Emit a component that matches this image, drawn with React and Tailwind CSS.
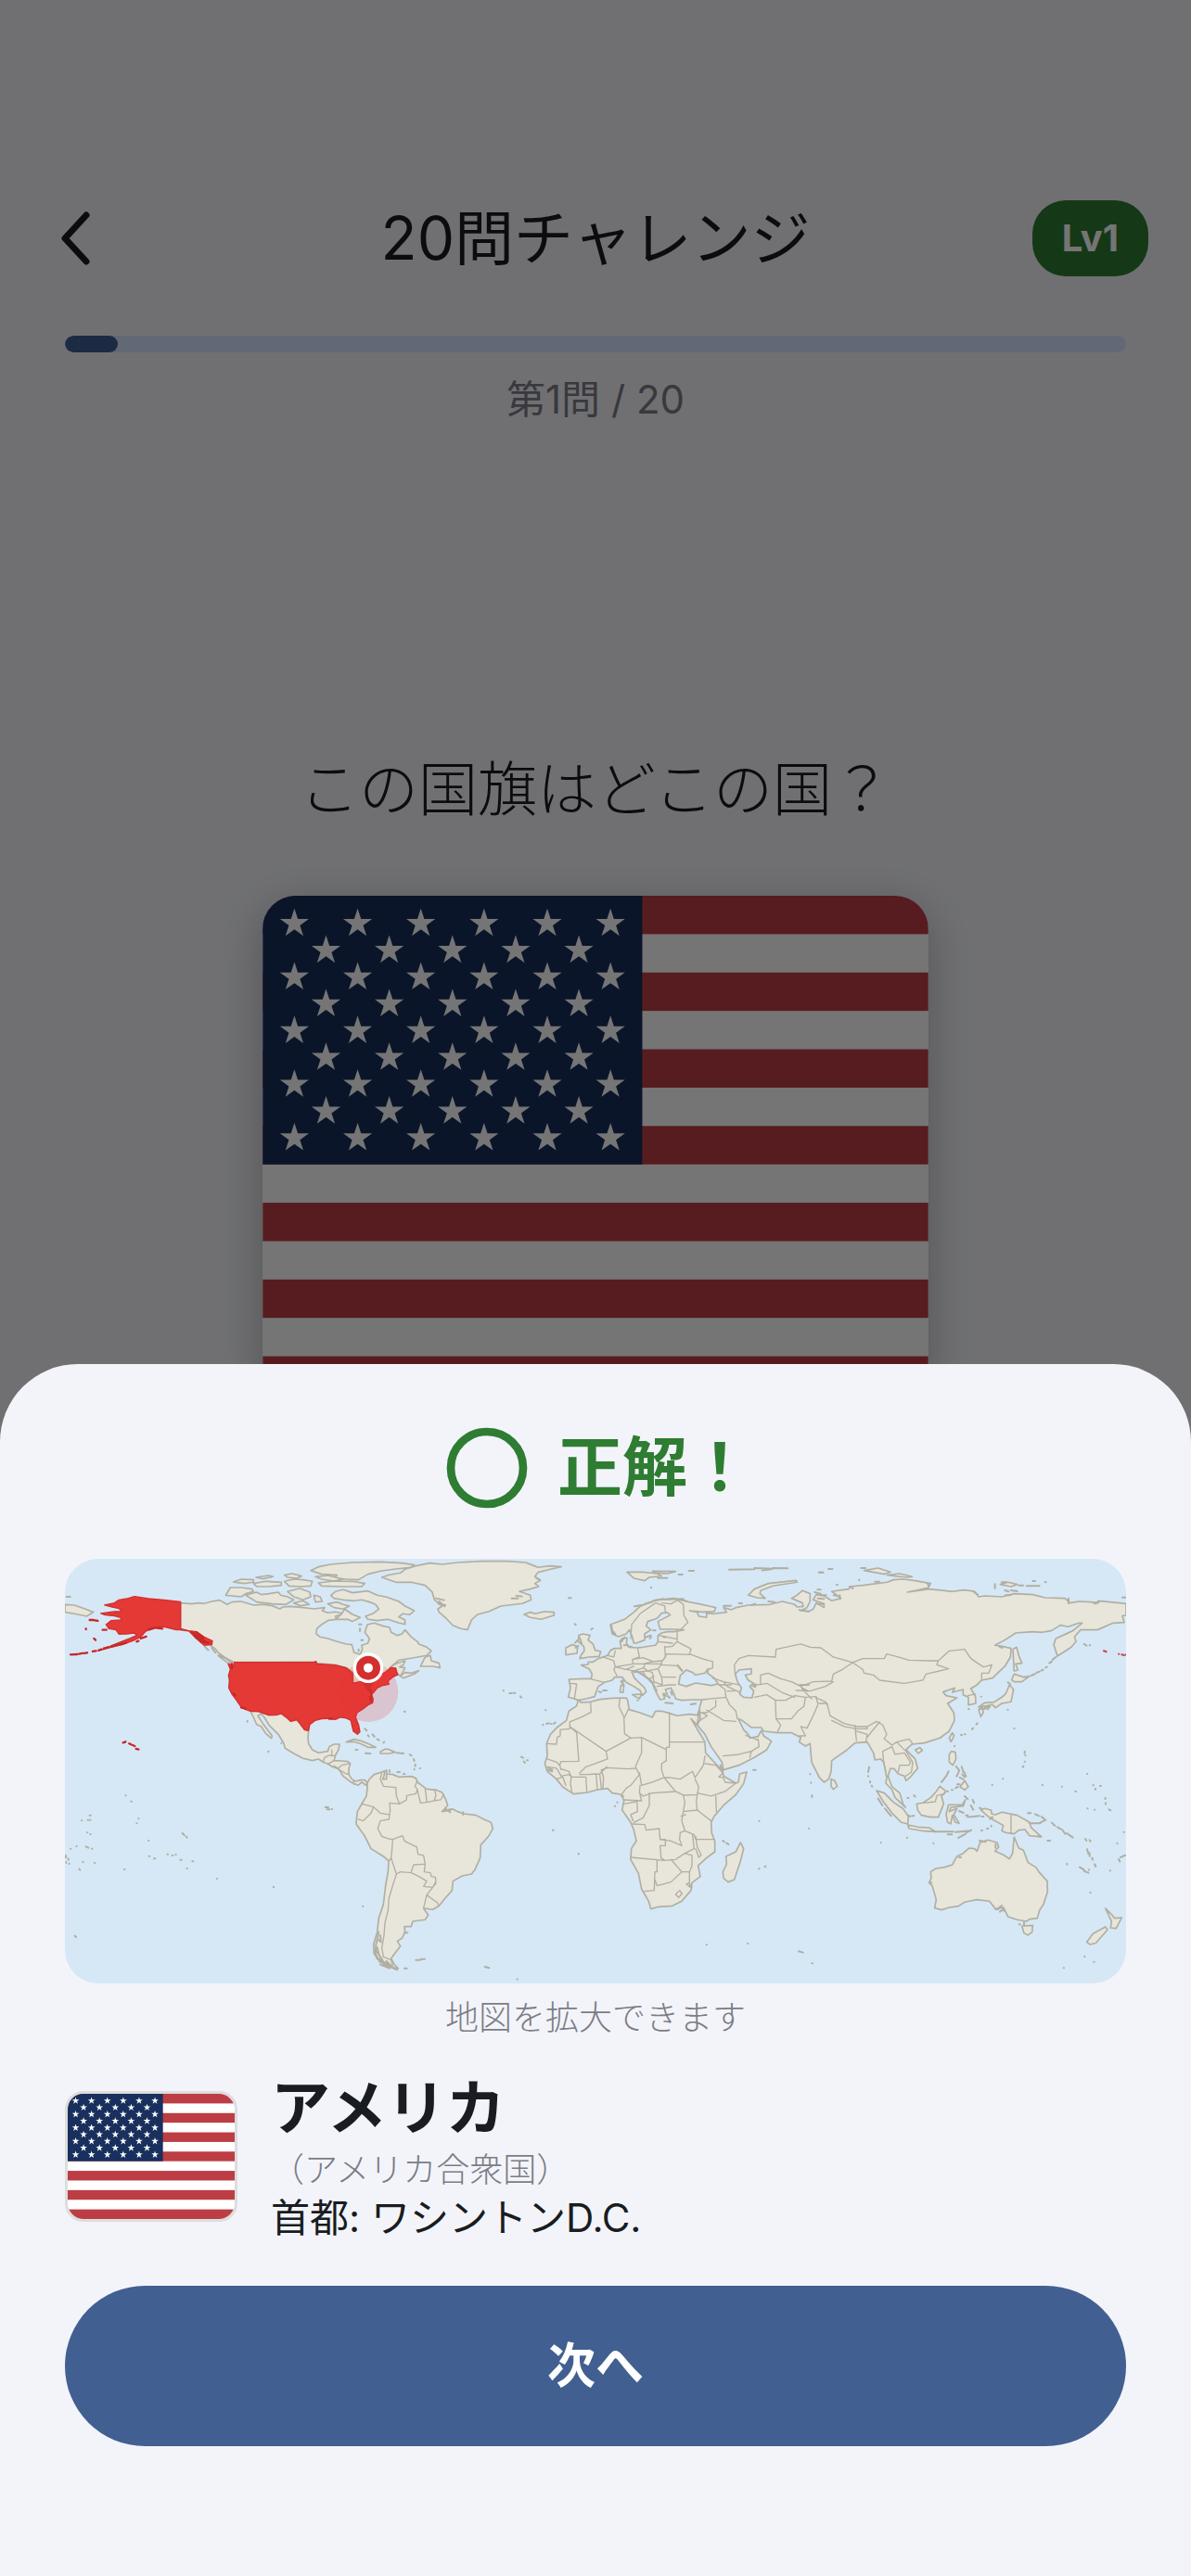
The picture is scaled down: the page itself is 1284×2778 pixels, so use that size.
import { useId } from 'react';

const TOTAL_QUESTIONS = 20;
const CURRENT_QUESTION = 1;

// ---------- Flag ----------

const STAR_POINTS = Array.from({ length: 10 }, (_, i) => {
  const r = i % 2 === 0 ? 14.6 : 5.6;
  const a = (Math.PI / 5) * i - Math.PI / 2;
  return `${(r * Math.cos(a)).toFixed(2)},${(r * Math.sin(a)).toFixed(2)}`;
}).join(' ');

const STARS = [];
for (let row = 0; row < 9; row++) {
  for (let col = row % 2; col < 11; col += 2) {
    STARS.push({ x: (col + 1) * 30.4, y: (row + 1) * 25.8 + 1 });
  }
}

const UsFlag = ({ className }) => {
  const starId = useId();
  return (
    <svg viewBox="0 0 640 480" className={className} role="img" aria-label="アメリカの国旗">
      <rect width="640" height="480" fill="#fff" />
      {[0, 2, 4, 6, 8, 10, 12].map((n) => (
        <rect key={n} y={(n * 480) / 13} width="640" height={480 / 13} fill="#bd3d44" />
      ))}
      <rect width="365" height={(480 / 13) * 7} fill="#192f5d" />
      <defs>
        <polygon id={starId} points={STAR_POINTS} fill="#fff" />
      </defs>
      {STARS.map((s) => (
        <use key={`${s.x}-${s.y}`} href={`#${starId}`} x={s.x} y={s.y} />
      ))}
    </svg>
  );
};

// ---------- World map ----------

// Land outlines, one sheet per quarter of the map. dx is the sheet's shift.
const SHEETS = [
  {
    name: 'north-america',
    dx: -30,
    land: [
      'M404 175L440 178 462 175 480 177 505 170 530 166 555 180 570 172 600 170 640 182 670 180 700 184 725 194 735 188 760 186 800 190 835 194 870 190 862 200 880 207 905 204 932 210 905 218 908 228 880 232 860 245 845 258 842 274 855 285 880 290 910 300 940 308 958 310 965 335 985 342 992 325 990 312 1010 305 1015 290 1000 270 1008 245 1030 240 1060 250 1080 254 1085 270 1105 280 1120 275 1130 262 1150 285 1170 300 1175 308 1200 318 1215 330 1200 345 1150 354 1110 360 1080 385 1100 372 1130 362 1125 375 1112 382 1130 385 1115 412 1107 405 1100 388 1085 388 1065 400 1045 410 1020 425 960 434 962 400 940 385 905 376 845 370 840 366 577 367 560 358 545 350 525 335 518 325 505 315 495 308 480 300 465 275 440 268 404 262Z',
      'M550 150L565 125 600 125 635 130 640 138 615 145 600 155 570 152Z',
      'M615 150L650 140 665 148 690 145 720 140 728 150 750 155 770 165 745 180 700 178 650 172Z',
      'M575 107L600 98 640 100 640 108 610 112ZM648 92L690 86 703 90 670 97ZM640 112L680 105 730 108 730 118 690 122 650 122Z',
      'M740 85L765 80 795 88 780 95 750 92ZM740 105L770 98 800 100 830 105 825 120 790 122 755 120Z',
      'M750 138L790 128 822 140 825 155 800 165 770 155ZM835 150L855 155 862 170 840 172ZM770 175L800 168 820 180 790 184Z',
      'M825 70L850 58 890 50 960 44 1050 42 1120 46 1160 52 1150 60 1100 65 1050 72 1010 82 980 100 940 98 900 95 910 85 860 82Z',
      'M850 110L900 104 960 105 1000 112 990 122 920 122 860 120ZM840 90L880 86 930 98 900 104 860 98Z',
      'M890 150L905 138 930 132 960 142 1010 136 1040 150 1070 156 1110 170 1130 185 1160 200 1145 213 1122 210 1110 220 1130 230 1130 244 1110 240 1075 228 1040 232 1010 228 1002 218 1025 210 1045 195 1035 180 1015 172 990 165 965 168 930 165 900 160Z',
      'M905 228L925 210 935 195 960 212 985 222 960 235 945 228ZM880 178L910 172 930 180 950 185 930 195 900 190Z',
      'M1180 380L1195 350 1212 345 1215 362 1240 370 1243 385 1220 380Z',
      'M1115 412L1130 400 1150 402 1175 394 1160 405 1125 418Z',
      'M525 345L545 352 572 370 555 368Z',
      'M630 526L655 526 690 538 715 537 730 533 750 548 760 558 780 553 790 565 805 585 818 590 816 610 818 630 830 650 850 660 880 655 885 640 900 632 918 632 915 650 906 665 900 685 925 686 945 688 953 695 948 712 948 730 958 745 970 752 985 748 1000 748 1008 757 1004 765 990 755 978 765 955 755 930 735 915 712 895 705 880 695 865 690 850 680 830 685 800 678 770 662 742 645 738 630 720 600 690 570 675 545 665 534 654 540 670 565 685 585 700 605 698 613 680 598 665 575 650 568 640 545Z',
      'M940 625L965 616 990 622 1015 632 1035 642 1010 642 990 632 965 624ZM1050 657L1065 648 1075 648 1098 658 1080 662 1050 662Z',
      'M30 180L60 182 95 194 122 205 100 218 60 210 30 205Z',
      'M1008 757L1015 745 1030 730 1055 722 1065 718 1062 735 1058 745 1070 745 1070 728 1090 730 1110 738 1150 736 1165 742 1170 755 1180 762 1200 777 1230 780 1250 788 1262 812 1268 830 1250 850 1262 848 1285 842 1300 850 1320 857 1360 862 1385 875 1408 885 1414 905 1400 930 1375 958 1373 1000 1355 1040 1345 1052 1315 1058 1285 1075 1282 1105 1260 1130 1240 1155 1220 1167 1190 1163 1205 1185 1195 1200 1155 1205 1150 1222 1128 1222 1130 1240 1120 1260 1105 1270 1115 1285 1100 1305 1085 1325 1095 1345 1108 1358 1080 1352 1050 1335 1030 1310 1028 1280 1040 1240 1045 1195 1060 1150 1067 1090 1075 1045 1077 1010 1060 995 1020 970 1000 930 972 890 973 875 976 850 990 825 1005 800 1008 775Z',
    ],
    borders: [
      'M865 690L870 675 885 668 893 670 893 650M893 670L905 668M880 697L900 685M900 702L915 710 925 700 950 695M918 715L940 728 950 728M963 750L965 762',
    ],
    islets: [
      'M1002 661L1018 662M1103 660L1125 662M1145 665l6 4M1158 680l2 6M1163 697v6M1160 712v2M1000 582l6 6M1010 603l3 4M1025 600l6 8M1040 616l6 3M1060 627l3 -2M970 650h6',
      'M482 316l12 12M505 320l12 16M530 342l14 8M35 155h12M620 557v2M688 655v2M730 628v1M872 836h10M878 843h8M893 842h1',
      'M226 798h1M244 817h2M110 862h3M84 879h1M104 877h2M112 877h1M268 873h1M262 888h1M102 918h1M112 923h1M300 944h1M410 920l6 6M422 931l3 3M67 962h1M48 970h1M98 963l8 4M117 970h1M33 992v6M41 1002v4M34 1014v2M44 1018v1M88 1013h1M126 1016h1M76 1036l3 3M302 994h2M318 1002h4M361 988h2M377 992h2M388 989h1M403 1006h4M442 1011h3M425 1034h1M222 1037h1M521 1067h1M704 1094h2M62 1252l4 4M993 1156h1M1129 526h1M1178 710h1M981 244h8M984 258v8M988 295h6M980 325v6',
    ],
  },
  {
    name: 'atlantic',
    dx: 870,
    land: [
      'M155 92L180 84 215 78 230 66 265 55 310 46 350 50 400 44 480 40 560 40 620 44 640 52 660 60 700 55 735 58 700 66 660 76 650 90 668 102 650 112 662 122 635 130 600 138 635 150 638 165 610 177 540 185 500 203 465 212 445 230 432 262 410 258 385 248 360 222 340 205 336 195 350 185 325 165 318 140 295 118 250 108 200 108Z',
      'M615 212L635 205 650 210 680 203 712 205 712 215 670 228 635 222Z',
    ],
    borders: [
      'M155 725L150 745 160 768 200 772 202 800 212 825 235 812 235 798 265 792 270 778 262 768 270 750M212 825L180 822 182 845 178 875M90 825L128 835 120 855 95 880 78 875M128 835L150 855 178 860M178 875L150 880 142 905 155 930 175 938 190 940M190 940L188 970 185 1000 178 1010M190 940L222 928 228 945 268 965 272 988 290 992 295 1020 292 1045M292 1020L258 1022 250 1045M185 1000L202 1052 215 1045 250 1048M250 1048L275 1060 300 1075 290 1092 320 1095 330 1075 328 1062 315 1060 312 1048 292 1045M330 1082L300 1120 290 1162M300 1120L335 1145 338 1152M202 1052L190 1090 178 1130 175 1170 165 1210 162 1250 155 1290 160 1320 185 1330 190 1350M270 780L280 822 300 820 298 795 295 778M300 820L325 815 330 795 325 780M325 815L345 812 355 795',
    ],
    islets: [
      'M145 1240L136 1280 134 1310 150 1338M140 1262l10 8M134 1300l12 12M142 1325l16 10M160 1342L204 1362M150 1345l30 12M140 1290l6 24 14 22 22 12M130 1302l10 24 22 18M150 1250l2 22M170 1334l20 20M228 1357h8M265 1330h14M282 1327h12M488 1352l14 4M593 1392v1M228 1242h10',
      'M568 467h6M580 466h6M603 477l3 4M548 459h1M684 522h1M676 568v2M688 566l6 -2M700 566h2M710 566l6 -4M606 673l6 3M624 684h3M614 688l4 4M709 910h1M791 987h1M228 526h1M759 159h8M779 243l3 3M832 261l5 -4M690 710l20 4M694 718l14 3M356 848l24 -6M360 840l16 12M418 852v8M330 160l26 6M338 178l22 4M340 170l18 16M575 160h20M590 152l18 2M655 95l10 6M170 716v8M180 716v6M205 722h8M225 728h4',
    ],
  },
  {
    name: 'europe-africa',
    dx: 1530,
    land: [
      'M100 422L150 420 172 420 175 405 165 388 140 376 162 374 163 366 178 366 195 355 210 350 225 345 235 328 248 322 270 322 265 300 272 290 288 288 286 305 295 318 320 320 340 318 380 312 388 300 388 280 400 272 418 268 440 268 472 262 440 260 395 260 388 235 428 214 418 206 400 208 385 225 355 235 350 250 365 262 345 275 345 295 318 305 310 305 305 285 296 262 285 275 260 284 240 275 234 245 280 228 310 205 330 186 380 166 440 160 480 170 520 178 575 190 570 203 530 204 490 200 515 205 520 218 545 222 545 208 570 210 610 205 600 190 625 197 640 190 680 182 750 180 790 170 830 180 838 188 858 186 855 175 820 160 835 152 855 135 880 145 880 170 870 190 850 200 875 203 890 195 900 175 925 190 925 178 890 165 900 148 925 152 950 168 980 160 960 145 950 138 1005 130 1010 122 1050 118 1130 108 1150 100 1180 98 1220 103 1270 112 1262 126 1195 140 1265 130 1340 138 1380 133 1412 138 1425 155 1445 152 1500 155 1540 145 1600 148 1640 158 1705 160 1720 175 1750 170 1790 172 1805 178 1812 168 1902 177 1902 215 1890 217 1896 238 1860 240 1810 262 1755 262 1735 285 1740 300 1725 318 1680 347 1668 310 1675 290 1730 265 1760 240 1750 240 1715 252 1690 247 1660 265 1630 270 1600 268 1545 272 1510 295 1478 312 1500 315 1530 322 1528 350 1510 380 1470 418 1435 425 1420 440 1400 452 1415 478 1416 500 1392 505 1392 480 1375 472 1375 455 1340 464 1348 450 1310 463 1320 475 1355 482 1325 500 1345 530 1347 555 1330 590 1300 612 1250 628 1210 632 1190 650 1220 680 1228 710 1205 738 1190 750 1185 735 1165 728 1152 712 1140 710 1132 735 1145 770 1170 790 1182 830 1155 805 1145 780 1125 758 1128 740 1118 690 1108 680 1090 683 1085 660 1065 625 1025 628 1000 650 950 685 948 720 940 745 925 755 910 740 885 690 880 630 865 638 845 625 850 610 820 595 775 595 730 590 722 578 690 578 660 555 648 550 665 585 680 600 685 612 712 607 722 588 730 605 755 622 740 650 700 675 650 700 600 715 595 690 560 640 540 600 515 570 525 550 522 515 530 488 500 488 465 490 445 485 440 470 430 450 412 455 418 470 405 468 410 485 395 488 380 460 370 435 345 410 318 395 303 398 312 418 345 450 350 462 338 474 330 458 310 445 285 432 272 415 248 415 240 425 215 432 195 445 183 478 155 485 130 490 118 485 98 480 105 450Z',
      'M130 490L140 497 170 495 200 487 240 483 285 482 290 490 295 520 330 530 370 545 380 525 400 525 425 532 450 540 490 535 515 538 522 520 515 570 495 550 525 600 540 625 542 660 575 695 598 720 600 735 640 758 648 755 652 728 675 722 665 760 640 795 600 830 570 865 560 885 562 920 572 945 572 980 545 1000 518 1025 525 1060 498 1080 495 1105 465 1140 435 1155 390 1158 365 1165 358 1140 335 1100 325 1050 300 1005 302 970 318 945 310 910 300 885 272 845 278 815 270 795 240 790 225 775 190 780 160 788 115 793 80 770 60 745 30 720 22 695 30 670 28 630 40 600 65 575 92 555 100 525 125 508Z',
      'M655 950L665 970 655 1010 635 1070 615 1078 600 1065 598 1045 610 1020 608 995 640 980Z',
      'M135 355L165 350 198 348 203 332 185 328 178 308 162 295 168 280 145 275 132 280 130 300 148 315 150 330 140 343ZM90 320L110 310 128 316 126 338 90 343Z',
      'M305 472L335 470 328 485ZM268 442L278 440 275 465 265 463ZM268 428L276 425 274 438Z',
      'M288 75L340 75 385 80 400 88 360 92 345 103 310 95ZM370 72L445 73 420 80 380 78Z',
      'M680 150L700 130 745 112 835 102 838 108 760 120 720 135 718 145 735 160 710 158Z',
    ],
    seas: [
      'M455 438L460 410 480 392 500 400 510 408 540 402 550 388 548 402 570 418 583 437 560 442 510 434 480 445Z',
      'M638 405L650 392 690 388 690 405 670 408 680 425 697 435 685 445 698 460 692 482 665 480 652 470 658 450 645 430Z',
      'M690 440L705 438 702 448Z',
    ],
    borders: [
      'M105 435L125 437 118 485M170 421L215 432M210 350L245 362M225 345L245 350 250 330M245 362L250 382 245 390 255 410M322 320L328 350 305 358 308 372 250 382M250 382L285 390 310 380M305 358L340 352 372 365 340 372 308 372M285 390L310 395 342 385 345 372 400 372 400 362 372 365M410 315L412 350 400 365M342 385L355 395 388 388 400 372M310 400L355 395M345 410L375 435M355 395L370 400 375 430 400 440M340 398L350 418M362 420L375 412M388 388L400 415 445 415M400 375L450 378 465 395M375 440L385 460M385 445L425 440 445 440M400 415L402 440M452 375L468 395',
      'M412 350L415 340 490 342M412 318L435 315 450 300 485 318 495 325 490 340 530 355 565 365 565 385 548 392M390 280L450 292M388 300L435 305M450 268L450 300M300 290L303 245 330 210 380 175 410 185 412 206M400 175L430 178 452 166 470 180 472 215 485 238 462 260',
      'M585 440L605 455 608 480 530 488M565 418L600 430 650 440M585 440L625 440M600 430L612 445 655 465M612 460L635 460M575 490L575 510 545 530 525 530M608 480L620 505 640 525 645 550M545 522L560 530 600 555 640 558M525 555L548 540 530 530M598 670L650 665 690 655 685 675M690 655L715 640 712 615M672 603L710 618',
      'M700 480L740 472 768 490 770 550 785 570 775 592M770 550L820 550 840 525 860 510 865 480M768 490L800 490 830 475 865 480 900 478M700 442L740 435 790 465 830 480M720 440L720 408 745 402 785 420 820 430 850 445M638 410L635 375 650 355 680 345 768 350 770 325 850 308 880 318 915 320 955 350 1018 368M850 445L890 430 950 428 955 405 985 390 1018 368M885 485L860 460 850 445M845 440L870 440M835 458L880 460 930 445 955 430M900 482L930 495 935 505M905 505L890 540 870 580 850 575 865 605 845 605',
      'M900 482L905 500 935 500 945 540 990 565 1030 575 1065 575 1095 558 1115 570M950 555L990 575 1030 582M1115 570L1128 600 1120 615 1145 635 1160 625 1200 615 1212 630M1025 570L1030 620M1030 590L1065 600 1060 625M1065 610L1080 590 1105 560M1065 575L1065 582 1030 582M1145 640L1115 655 1118 690 1125 720M1145 640L1155 665 1185 660 1205 690 1200 700 1170 700 1165 722M1160 625L1190 655 1212 690 1208 722 1190 735M1390 475L1415 470',
      'M1018 368L1050 355 1120 355 1128 340 1165 350 1200 360 1270 362 1295 362 1330 330 1380 325 1400 355 1440 382 1468 375 1458 402 1435 402 1435 422M1018 368L1050 390 1055 402 1085 408 1105 425 1185 435 1245 425 1255 405 1328 388 1290 375 1295 362',
      'M170 497L172 528 140 545 103 560 103 578M28 630L60 632 62 610 72 605 72 585 103 582M103 575L125 595 132 687 75 688 70 700M103 575L220 655 225 680 185 695 155 705 135 725M220 655L300 612 280 598 278 545 262 510 265 485M280 545L292 520M425 530L425 642M425 625L535 625M300 612L335 610 415 650 415 642 425 642M415 650L415 685 400 695 400 715 408 740M335 612L335 660 315 705M315 710L290 712 225 708 205 715M315 705L328 730 300 765 285 775 270 795M328 725L335 765 370 755 408 740M408 740L445 785 370 790 340 800 328 790 330 765M278 812L335 815 330 795M408 740L425 740 460 745 500 720 508 740M508 740L515 730 535 700 540 670M445 785L470 797 515 795 520 770 508 745M540 695L575 700 598 725 585 738 600 740M600 740L605 755 640 758M515 790L560 800 605 785 640 758M575 800L577 850M470 797L475 820 470 850 515 845 512 820 515 795M515 845L560 880M360 790L360 830 340 870 310 885M278 825L320 818 322 850 300 860 308 880M305 890L345 892 350 910 392 905 395 940 430 945 465 960 458 940 460 918 475 912M475 912L465 880 470 850M462 865L478 860M475 912L505 925 510 940 570 940',
      'M395 940L412 940 412 960 395 960 398 1000 410 1008 300 998M410 1008L445 1005 475 985 505 970 500 925M510 930L515 965 528 990 520 998 510 970M475 985L498 992 498 1025 490 1045 465 1045 430 1005M385 1008L385 1045 378 1045 376 1105 345 1108M378 1070L385 1090 430 1078 465 1045M490 1045L490 1085 498 1095M445 1118L458 1105 466 1115 455 1128ZM480 1085L490 1080 492 1095ZM75 715L70 700 60 690 30 680M30 705L60 710 75 735M60 745L80 738 90 765M110 790L105 760 108 738 155 738 158 785M108 738L100 730 75 735M75 712L100 720 108 738M160 730L188 728 192 778M200 730L205 775M205 715L212 740 210 775M135 730L160 730 200 728 222 705',
    ],
    islets: [
      'M412 498l24 2M494 503l16 -2M198 462l6 2M210 458h12M406 472l8 4M420 476l6 6M430 462l4 10M318 395L352 416M360 420l8 12M238 250l4 24M244 268l6 8M312 186l24 -4M345 178l24 -6M375 168l30 -6M410 164l60 -2M470 166l12 4',
      'M618 67L700 66M700 62l60 2M725 70l30 -4M760 62L808 63M455 83h12M488 71h16M365 125h2M388 94h30M910 76h12M940 65h12M600 184h24M650 176h10M690 182l12 -4M745 170l20 2M845 198l30 4M895 140l20 6M905 160l20 2',
      'M128 296l-8 8M122 320l8 -6M135 288l6 18M270 300l10 -14M278 312h8M292 316h10M350 286l14 -6M362 290l4 -6M372 264h8M405 284l8 2M852 440h24M856 452l16 8M590 700l6 16M696 715h8M598 944l4 4M610 952l6 4M714 1035h2M733 1029l3 -2M715 880h1M876 905h1M880 728v1M883 756v1M886 797v6M545 1281h1M678 1277h1M843 1302l14 4M886 1341h2M48 910h1M131 987h1M248 832h2M256 820h1M270 800h6M32 708l14 6M32 716l14 4M322 490h1',
    ],
  },
  {
    name: 'asia-oceania',
    dx: 2430,
    land: [
      'M48 745L60 750 68 768 55 778 48 768Z',
      'M195 782L220 790 250 820 280 840 298 865 296 890 275 885 245 855 215 815Z',
      'M296 893L330 900 365 902 385 915 340 912 300 905Z',
      'M325 825L345 822 370 805 388 785 400 768 420 785 405 800 412 825 395 868 370 868 340 862 328 845Z',
      'M428 828L472 828 482 812 476 832 435 837 430 850 455 840 445 860 462 888 450 885 440 862 435 890 425 885 420 858Z',
      'M532 845L545 840 565 845 568 858 580 860 600 852 650 862 690 885 695 902 728 932 690 928 675 908 655 910 640 922 612 918 600 912 605 895 575 878 555 865Z',
      'M430 665L437 655 450 658 452 680 442 700 430 690ZM465 770L480 750 492 770 480 780Z',
      'M430 612L440 595 446 605 436 624ZM320 650L335 643 343 652 330 662Z',
      'M525 520L538 515 540 530 532 543ZM525 512L545 498 575 496 600 480 612 470 625 440 638 455 630 495 600 500 580 514 570 504 550 508ZM545 514L562 510 555 520Z',
      'M640 405L670 415 690 412 665 430 640 430 632 424ZM636 325L648 318 655 345 665 370 645 372 652 392 640 395Z',
      'M370 1045L385 1035 415 1030 440 1022 455 995 475 985 495 968 512 970 520 978 530 950 555 942 585 950 590 965 578 978 605 990 625 1003 635 985 640 932 655 968 670 975 685 1015 710 1030 720 1045 747 1075 748 1110 735 1150 722 1170 715 1195 690 1198 680 1205 650 1200 620 1190 605 1160 580 1165 560 1140 520 1135 480 1143 460 1156 430 1160 405 1168 383 1162 388 1135 375 1090 365 1080 372 1065Z',
      'M665 1220L700 1218 698 1240 685 1250 672 1243Z',
      'M935 1163L955 1183 965 1195 988 1193 970 1228 952 1226 955 1205ZM875 1272L895 1245 935 1223 942 1232 905 1275 885 1280Z',
      'M155 70L200 62 240 75 220 82ZM230 85L270 80 310 90 290 92ZM595 115L620 108 650 115 630 122Z',
    ],
    borders: ['M630 860V922', 'M345 822L385 818 390 798 415 792'],
    islets: [
      'M383 915h60M450 916l50 -4M460 935l22 -12M485 918l16 -8M425 924h14M200 808l14 22M222 840l20 24M296 862l8 4M310 864h6M295 806h3M316 798l4 4M282 828l6 8',
      'M690 888l34 0M724 886l12 -6M728 866l14 12M684 855h10M708 858l12 6M762 886l10 10M780 900l10 6M795 908l10 14M810 920l20 14M716 930h10M748 944h8M500 830l8 14M506 812l4 10M484 862h6M490 868l38 -4M535 866h6M462 848l14 6M570 868l-8 6M566 895v3M552 905h4M534 911h3M480 800l10 10M528 838l8 4',
      'M452 704l10 12M462 718l-8 18M470 705l6 18M478 722l6 14M464 740l12 6M472 730l8 8M456 762h8M405 755l14 -18M420 736l8 -16M424 784h2M438 780h3M450 774l8 -4M447 637v2M468 602h3M480 600h2M504 584l3 -4M518 568l3 -4M492 518h2M533 478h1M619 520h1M640 581h1M674 655v6M676 668h1M675 688v1M668 706l2 -3M603 744h1M569 763v1M731 764h1M794 769h1M838 785h2M876 728h1M895 765h2M903 776v3M918 767h3M935 805v4M936 822v4M877 840h1M900 844h1M947 843l5 3M994 916h1M973 953h1M870 938l4 6M884 942l3 4M876 972l4 14M884 984v10M892 1000l2 6M900 1020l4 8M852 1030l14 8M866 1042l14 6M882 1038v1M811 1018v3M950 1041h1M978 1004l4 8M984 998l10 -4M995 992h5M886 1112h1M868 1318v2M898 1336h1M800 1356h1M209 950v1M294 934v1M379 952v1M171 706l-3 16M168 735v1M174 752v4M179 766l2 3',
      'M695 410l12 -5M712 401l10 -4M728 394l6 -3M742 384l4 -2M754 370l8 -6M765 358l10 -8M866 308l8 5M884 312h2M530 516l14 2M620 432l8 6M145 62h14M8 76h14M40 65h12M108 122l10 6M138 100h2M66 116h3M4 132h10M12 150h20M76 150v12M56 150l12 2M4 178h20M190 106h14M578 114v14M610 134l12 4M630 134l20 3M600 108h14M655 118h14M680 120h42M700 104h8M740 108h3M360 112l4 8M508 138l14 10M612 150h16M816 160v16M898 174h16M990 157h10M592 316l10 4M656 1215h3M672 1208v8M365 1080h8M462 998h6M528 944l20 4M580 955v12M590 1162l10 -8M594 1174l8 -6M580 1166h8M604 1165l4 6',
    ],
  },
];

const ALASKA =
  'M404 171L350 165 300 161 255 154 235 160 205 165 190 175 158 182 180 188 205 193 215 202 190 203 146 209 160 214 190 217 210 222 212 230 180 232 163 245 172 258 195 262 205 276 230 275 255 272 262 280 240 290 205 303 170 318 135 330 175 320 215 310 250 297 275 285 290 268 310 254 350 252 390 262 404 262 430 265 455 290 480 312 505 310 507 298 480 285 455 268 430 265 404 258Z';
const MAINLAND_US =
  'M558 372L577 378 577 367 836 367 842 364 845 372 905 376 940 385 960 402 962 425 960 435 985 430 1011 425 1045 410 1065 400 1085 384 1100 386 1102 398 1107 407 1090 415 1075 428 1078 438 1055 443 1040 450 1028 465 1020 472 1027 485 1025 498 1010 505 995 517 975 530 970 545 980 570 984 592 976 600 963 590 958 570 955 555 940 548 920 545 905 552 890 548 860 550 840 555 822 568 818 588 805 585 790 565 780 553 760 558 750 548 730 533 715 537 690 538 655 526 630 525 615 520 600 512 585 490 570 470 560 450 562 425 559 410 565 390Z';
const US_ISLETS =
  'M48 342L70 341M76 340l10 -2M92 338l10 -2M120 332l10 -2M140 328l8 -3M156 322l14 -4M180 315l20 -6M208 309l20 -5M110 230h12M126 231l10 2M98 258v2M124 290l5 5M152 262h12M262 300l6 -2M275 290l18 -6M218 627l8 -3M238 630l6 3M249 635l7 3M260 647l8 2M300 262l20 -6M325 256l20 2M440 270l50 34M455 270l24 18M470 300l26 4M450 282l16 14M570 372v14M1018 455l4 22M1016 480l6 14M885 550h12M575 468l6 6M600 513l14 4';

const WorldMap = () => (
  <svg viewBox="0 0 3432 1371" className="block h-full w-full" role="img" aria-label="世界地図">
    {SHEETS.map((sheet) => (
      <g
        key={sheet.name}
        transform={`translate(${sheet.dx} -33)`}
        stroke="#b0afa3"
        strokeWidth="5"
        strokeLinejoin="round"
        strokeLinecap="round"
      >
        <g fill="#e8e5da">
          {sheet.land.map((d) => (
            <path key={d} d={d} />
          ))}
        </g>
        <g fill="#d6e8f6">
          {(sheet.seas || []).map((d) => (
            <path key={d} d={d} />
          ))}
        </g>
        <g fill="none" strokeWidth="4">
          {sheet.borders.map((d) => (
            <path key={d} d={d} />
          ))}
        </g>
        <g fill="none" strokeWidth="6">
          {sheet.islets.map((d) => (
            <path key={d} d={d} />
          ))}
        </g>
      </g>
    ))}

    {/* Highlighted country */}
    <g transform="translate(-30 -33)" strokeLinejoin="round" strokeLinecap="round">
      <g fill="#e53935" stroke="#d32f2f" strokeWidth="4">
        <path d={ALASKA} />
        <path d={MAINLAND_US} />
      </g>
      <path d={US_ISLETS} fill="none" stroke="#c62828" strokeWidth="7" />
      <path
        d="M3390 330l8 3M3438 340h1M3448 342l8 2M3462 342v1"
        fill="none"
        stroke="#c9474a"
        strokeWidth="6"
      />
      {/* Pin */}
      <circle cx="1011" cy="463" r="97" fill="#e53935" fillOpacity="0.2" />
      <path d="M988 428H1034L1011 463Z" fill="#d32f2f" />
      <circle cx="1011" cy="385" r="49" fill="#fff" />
      <circle cx="1011" cy="385" r="39" fill="#d32f2f" />
      <circle cx="1011" cy="385" r="15" fill="#fff" />
    </g>
  </svg>
);

// ---------- Screen ----------

const QuizHeader = () => (
  <header className="grid h-[168px] grid-cols-[1fr_auto_1fr] items-center px-[46px]">
    <button type="button" aria-label="戻る" className="justify-self-start">
      <svg
        viewBox="0 0 72 72"
        className="block size-[72px]"
        fill="none"
        stroke="#191c20"
        strokeWidth="7"
        strokeLinecap="round"
        strokeLinejoin="round"
      >
        <path d="M47 11L24 36L47 61" />
      </svg>
    </button>
    <h1 className="text-[64px] leading-[80px]">20問チャレンジ</h1>
    <span className="justify-self-end rounded-[36px] bg-[#2e7d32] px-8 py-4 text-[40px] leading-[50px] font-bold text-white">
      Lv1
    </span>
  </header>
);

const Progress = () => (
  <div className="mt-[21px] px-[70px]">
    <div
      role="progressbar"
      aria-valuenow={CURRENT_QUESTION}
      aria-valuemax={TOTAL_QUESTIONS}
      className="h-[18px] overflow-hidden rounded-full bg-[#d6e3ff]"
    >
      <div
        className="h-full rounded-full bg-[#415f91]"
        style={{ width: `${(CURRENT_QUESTION / TOTAL_QUESTIONS) * 100}%` }}
      />
    </div>
    <p className="mt-6 text-center text-[42px] leading-[54px] text-[#7a7d85]">
      第{CURRENT_QUESTION}問 / {TOTAL_QUESTIONS}
    </p>
  </div>
);

const ResultSheet = () => (
  <section
    role="dialog"
    aria-label="正解"
    className="absolute inset-x-0 bottom-0 rounded-t-[84px] bg-[#f3f4fa] px-[70px] pt-[60px] pb-[140px]"
  >
    <div className="flex items-center justify-center gap-6 text-[#2e7d32]">
      <svg viewBox="0 0 24 24" className="size-[104px]" fill="none" stroke="currentColor" strokeWidth="2">
        <circle cx="12" cy="12" r="9" />
      </svg>
      <h2 className="text-[70px] leading-[80px] font-bold">正解！</h2>
    </div>

    <div className="mt-[46px] aspect-[5/2] overflow-hidden rounded-[36px] bg-[#d6e8f6]">
      <WorldMap />
    </div>
    <p className="mt-[10px] text-center text-[36px] leading-[54px] font-light text-[#7a7d85]">
      地図を拡大できます
    </p>

    <div className="mt-[30px] flex items-center gap-[36px]">
      <div className="shrink-0 overflow-hidden rounded-[20px] border-[3px] border-[#dddddd]">
        <UsFlag className="block h-[135px] w-[180px]" />
      </div>
      <div>
        <h3 className="text-[64px] leading-[80px] font-bold">アメリカ</h3>
        <p className="text-[36px] leading-[54px] font-light text-[#7a7d85]">（アメリカ合衆国）</p>
        <p className="text-[42px] leading-[50px]">首都: ワシントンD.C.</p>
      </div>
    </div>

    <button
      type="button"
      className="mt-12 h-[173px] w-full rounded-full bg-[#415f91] text-[52px] font-semibold text-white"
    >
      次へ
    </button>
  </section>
);

const App = () => (
  <div
    lang="ja"
    className="relative min-h-screen overflow-hidden bg-[#f3f4fa] font-['Inter','Noto_Sans_CJK_JP',sans-serif] text-[#191c20]"
  >
    <div className="pt-[173px]">
      <QuizHeader />
      <Progress />
      <main className="mt-[353px] flex flex-col items-center">
        <p className="text-[64px] leading-[80px] font-light">この国旗はどこの国？</p>
        <div className="mt-[75px] overflow-hidden rounded-[36px] shadow-[0_12px_48px_rgba(0,0,0,0.25)]">
          <UsFlag className="block h-[538px] w-[718px]" />
        </div>
      </main>
    </div>

    {/* Scrim behind the sheet */}
    <div className="absolute inset-0 bg-black/54" />
    <ResultSheet />
  </div>
);

export default App;
